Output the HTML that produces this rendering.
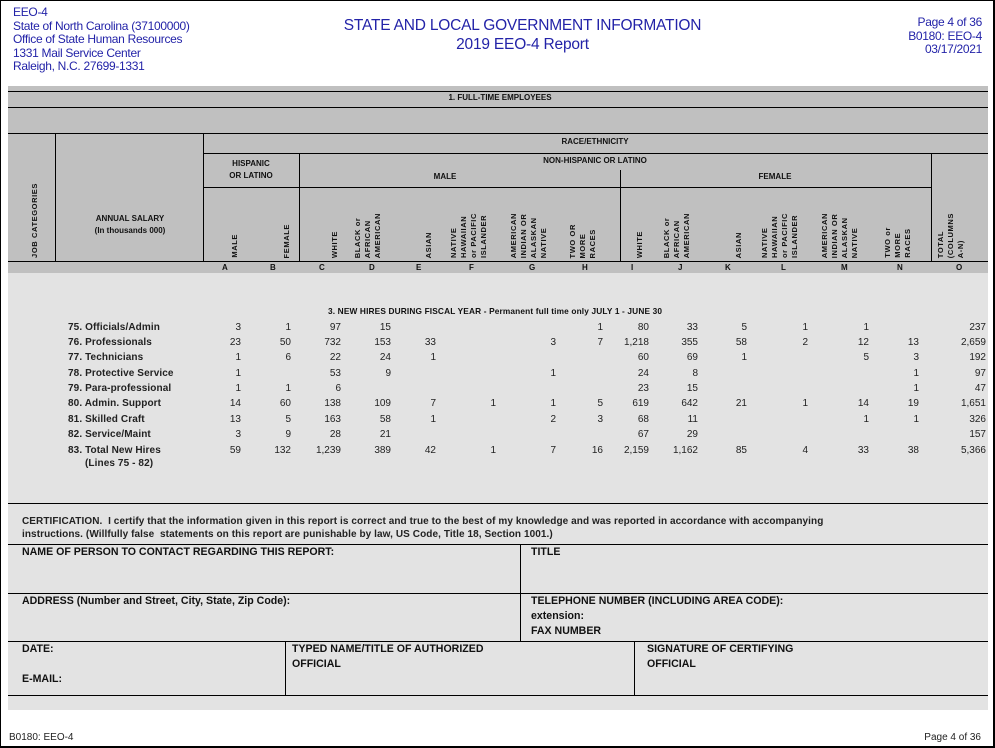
<!DOCTYPE html>
<html><head><meta charset="utf-8"><style>
*{margin:0;padding:0;box-sizing:border-box}
body{width:995px;height:748px;position:relative;background:#fff;font-family:"Liberation Sans",Arial,sans-serif;overflow:hidden}
.frame{position:absolute;left:0;top:0;width:995px;height:748px;border:1px solid #000;border-right-width:2px;border-bottom-width:2px}
.blue{position:absolute;color:#2323a8;font-size:12px;line-height:13.5px;letter-spacing:-0.3px}
.hd{position:absolute;left:8px;top:86px;width:980px;height:187px;background:#c0c0c0}
.bd{position:absolute;left:8px;top:273px;width:980px;height:437px;background:#e3e3e3}
.h{position:absolute;height:1px;background:#000}
.v{position:absolute;width:1px;background:#000}
.t{position:absolute;font-size:8px;font-weight:bold;color:#111;white-space:nowrap}
.rot{position:absolute;bottom:490px;writing-mode:vertical-rl;transform:rotate(180deg);font-size:7.5px;line-height:10px;font-weight:bold;color:#111;white-space:nowrap;letter-spacing:0.6px}
.row{position:absolute;left:0;width:995px;height:14px;font-size:10px;color:#222}
.row span{position:absolute;width:60px;text-align:right;top:0}
.row b{position:absolute;left:68px;top:0;font-weight:bold;letter-spacing:0.1px}
.lab{position:absolute;font-size:10.6px;font-weight:bold;color:#111;line-height:15px}
</style></head><body>
<div class="frame"></div>
<div class="blue" style="left:13px;top:6px">EEO-4<br>State of North Carolina (37100000)<br>Office of State Human Resources<br>1331 Mail Service Center<br>Raleigh, N.C. 27699-1331</div>
<div class="blue" style="left:300px;top:16px;width:445px;text-align:center;font-size:15.5px;line-height:19px;letter-spacing:-0.2px">STATE AND LOCAL GOVERNMENT INFORMATION<br>2019 EEO-4 Report</div>
<div class="blue" style="right:13px;top:16px;text-align:right">Page 4 of 36<br>B0180: EEO-4<br>03/17/2021</div>

<div class="hd"></div>
<div class="bd"></div>
<div class="h" style="left:8px;top:91px;width:980px"></div>
<div class="h" style="left:8px;top:107px;width:980px"></div>
<div class="h" style="left:8px;top:133px;width:980px"></div>
<div class="h" style="left:203px;top:153px;width:785px"></div>
<div class="h" style="left:203px;top:187px;width:728px"></div>
<div class="h" style="left:8px;top:261px;width:980px"></div>
<div class="v" style="left:55px;top:133px;height:129px"></div>
<div class="v" style="left:203px;top:133px;height:129px"></div>
<div class="v" style="left:299px;top:153px;height:109px"></div>
<div class="v" style="left:620px;top:170px;height:92px"></div>
<div class="v" style="left:931px;top:153px;height:109px"></div>

<div class="t" style="left:400px;top:93px;width:200px;text-align:center">1. FULL-TIME EMPLOYEES</div>
<div class="t" style="left:520px;top:137px;width:150px;text-align:center">RACE/ETHNICITY</div>
<div class="t" style="left:520px;top:156px;width:150px;text-align:center">NON-HISPANIC OR LATINO</div>
<div class="t" style="left:203px;top:158px;width:96px;text-align:center;line-height:12px">HISPANIC<br>OR LATINO</div>
<div class="t" style="left:420px;top:172px;width:50px;text-align:center">MALE</div>
<div class="t" style="left:750px;top:172px;width:50px;text-align:center">FEMALE</div>
<div class="t" style="left:60px;top:213px;width:140px;text-align:center;line-height:12px">ANNUAL SALARY<br>(In thousands 000)</div>

<div class="rot" style="left:30px">JOB CATEGORIES</div>
<div class="rot" style="left:230px">MALE</div>
<div class="rot" style="left:282px">FEMALE</div>
<div class="rot" style="left:330px">WHITE</div>
<div class="rot" style="left:353px">BLACK or<br>AFRICAN<br>AMERICAN</div>
<div class="rot" style="left:424px">ASIAN</div>
<div class="rot" style="left:449px">NATIVE<br>HAWAIIAN<br>or PACIFIC<br>ISLANDER</div>
<div class="rot" style="left:509px">AMERICAN<br>INDIAN OR<br>ALASKAN<br>NATIVE</div>
<div class="rot" style="left:568px">TWO OR<br>MORE<br>RACES</div>
<div class="rot" style="left:635px">WHITE</div>
<div class="rot" style="left:662px">BLACK or<br>AFRICAN<br>AMERICAN</div>
<div class="rot" style="left:734px">ASIAN</div>
<div class="rot" style="left:760px">NATIVE<br>HAWAIIAN<br>or PACIFIC<br>ISLANDER</div>
<div class="rot" style="left:820px">AMERICAN<br>INDIAN OR<br>ALASKAN<br>NATIVE</div>
<div class="rot" style="left:883px">TWO or<br>MORE<br>RACES</div>
<div class="rot" style="left:936px">TOTAL<br>(COLUMNS<br>A-N)</div>

<div class="t" style="top:263px;left:222px">A</div>
<div class="t" style="top:263px;left:270px">B</div>
<div class="t" style="top:263px;left:319px">C</div>
<div class="t" style="top:263px;left:369px">D</div>
<div class="t" style="top:263px;left:416px">E</div>
<div class="t" style="top:263px;left:469px">F</div>
<div class="t" style="top:263px;left:529px">G</div>
<div class="t" style="top:263px;left:582px">H</div>
<div class="t" style="top:263px;left:631px">I</div>
<div class="t" style="top:263px;left:678px">J</div>
<div class="t" style="top:263px;left:725px">K</div>
<div class="t" style="top:263px;left:781px">L</div>
<div class="t" style="top:263px;left:841px">M</div>
<div class="t" style="top:263px;left:897px">N</div>
<div class="t" style="top:263px;left:956px">O</div>

<div class="t" style="left:328px;top:306px;font-size:8.3px;letter-spacing:0.15px">3. NEW HIRES DURING FISCAL YEAR - Permanent full time only JULY 1 - JUNE 30</div>

<div class="row" style="top:322px"><b>75. Officials/Admin</b><span style="left:181px">3</span><span style="left:231px">1</span><span style="left:281px">97</span><span style="left:331px">15</span><span style="left:543px">1</span><span style="left:589px">80</span><span style="left:638px">33</span><span style="left:687px">5</span><span style="left:748px">1</span><span style="left:809px">1</span><span style="left:926px">237</span></div>
<div class="row" style="top:337px"><b>76. Professionals</b><span style="left:181px">23</span><span style="left:231px">50</span><span style="left:281px">732</span><span style="left:331px">153</span><span style="left:376px">33</span><span style="left:496px">3</span><span style="left:543px">7</span><span style="left:589px">1,218</span><span style="left:638px">355</span><span style="left:687px">58</span><span style="left:748px">2</span><span style="left:809px">12</span><span style="left:859px">13</span><span style="left:926px">2,659</span></div>
<div class="row" style="top:352px"><b>77. Technicians</b><span style="left:181px">1</span><span style="left:231px">6</span><span style="left:281px">22</span><span style="left:331px">24</span><span style="left:376px">1</span><span style="left:589px">60</span><span style="left:638px">69</span><span style="left:687px">1</span><span style="left:809px">5</span><span style="left:859px">3</span><span style="left:926px">192</span></div>
<div class="row" style="top:368px"><b>78. Protective Service</b><span style="left:181px">1</span><span style="left:281px">53</span><span style="left:331px">9</span><span style="left:496px">1</span><span style="left:589px">24</span><span style="left:638px">8</span><span style="left:859px">1</span><span style="left:926px">97</span></div>
<div class="row" style="top:383px"><b>79. Para-professional</b><span style="left:181px">1</span><span style="left:231px">1</span><span style="left:281px">6</span><span style="left:589px">23</span><span style="left:638px">15</span><span style="left:859px">1</span><span style="left:926px">47</span></div>
<div class="row" style="top:398px"><b>80. Admin. Support</b><span style="left:181px">14</span><span style="left:231px">60</span><span style="left:281px">138</span><span style="left:331px">109</span><span style="left:376px">7</span><span style="left:436px">1</span><span style="left:496px">1</span><span style="left:543px">5</span><span style="left:589px">619</span><span style="left:638px">642</span><span style="left:687px">21</span><span style="left:748px">1</span><span style="left:809px">14</span><span style="left:859px">19</span><span style="left:926px">1,651</span></div>
<div class="row" style="top:414px"><b>81. Skilled Craft</b><span style="left:181px">13</span><span style="left:231px">5</span><span style="left:281px">163</span><span style="left:331px">58</span><span style="left:376px">1</span><span style="left:496px">2</span><span style="left:543px">3</span><span style="left:589px">68</span><span style="left:638px">11</span><span style="left:809px">1</span><span style="left:859px">1</span><span style="left:926px">326</span></div>
<div class="row" style="top:429px"><b>82. Service/Maint</b><span style="left:181px">3</span><span style="left:231px">9</span><span style="left:281px">28</span><span style="left:331px">21</span><span style="left:589px">67</span><span style="left:638px">29</span><span style="left:926px">157</span></div>
<div class="row" style="top:445px"><b>83. Total New Hires</b><span style="left:181px">59</span><span style="left:231px">132</span><span style="left:281px">1,239</span><span style="left:331px">389</span><span style="left:376px">42</span><span style="left:436px">1</span><span style="left:496px">7</span><span style="left:543px">16</span><span style="left:589px">2,159</span><span style="left:638px">1,162</span><span style="left:687px">85</span><span style="left:748px">4</span><span style="left:809px">33</span><span style="left:859px">38</span><span style="left:926px">5,366</span></div>
<div class="row" style="top:458px"><b style="left:85px">(Lines 75 - 82)</b></div>

<div class="h" style="left:8px;top:503px;width:980px"></div>
<div style="position:absolute;left:22px;top:515px;font-size:10px;line-height:13px;font-weight:bold;color:#222;white-space:nowrap;letter-spacing:0.08px"> CERTIFICATION.&nbsp; I certify that the information given in this report is correct and true to the best of my knowledge and was reported in accordance with accompanying<br>instructions. (Willfully false&nbsp; statements on this report are punishable by law, US Code, Title 18, Section 1001.)</div>
<div class="h" style="left:8px;top:544px;width:980px"></div>
<div class="h" style="left:8px;top:593px;width:980px"></div>
<div class="h" style="left:8px;top:641px;width:980px"></div>
<div class="h" style="left:8px;top:695px;width:980px"></div>
<div class="v" style="left:520px;top:544px;height:97px"></div>
<div class="v" style="left:285px;top:641px;height:54px"></div>
<div class="v" style="left:634px;top:641px;height:54px"></div>
<div class="lab" style="left:22px;top:545px">NAME OF PERSON TO CONTACT REGARDING THIS REPORT:</div>
<div class="lab" style="left:531px;top:545px">TITLE</div>
<div class="lab" style="left:22px;top:594px">ADDRESS (Number and Street, City, State, Zip Code):</div>
<div class="lab" style="left:531px;top:594px">TELEPHONE NUMBER (INCLUDING AREA CODE):<br>extension:<br>FAX NUMBER</div>
<div class="lab" style="left:22px;top:642px">DATE:</div>
<div class="lab" style="left:22px;top:672px">E-MAIL:</div>
<div class="lab" style="left:292px;top:642px">TYPED NAME/TITLE OF AUTHORIZED<br>OFFICIAL</div>
<div class="lab" style="left:647px;top:642px">SIGNATURE OF CERTIFYING<br>OFFICIAL</div>

<div style="position:absolute;left:9px;top:732px;font-size:10px;color:#222">B0180: EEO-4</div>
<div style="position:absolute;right:14px;top:732px;font-size:10px;color:#222">Page 4 of 36</div>
</body></html>
